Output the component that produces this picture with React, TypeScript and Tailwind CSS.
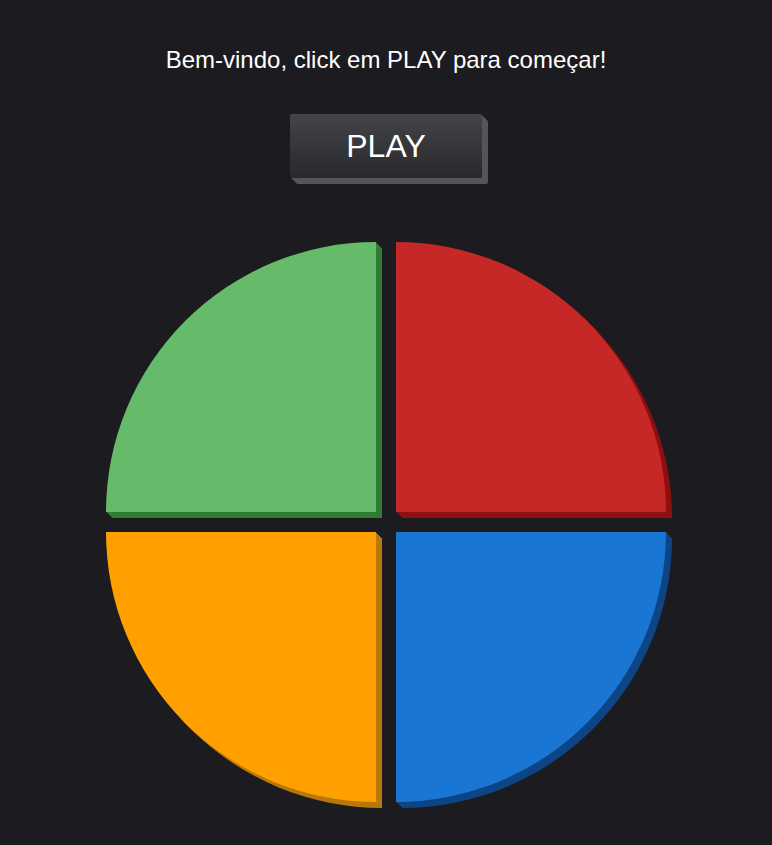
const Quadrant = ({ className }: { className: string }) => (
  <button className={`w-[270px] h-[270px] cursor-pointer ${className}`} />
);

export default function App() {
  return (
    <div className="min-h-[845px] w-full bg-[#1c1b1f] flex flex-col items-center font-['Liberation_Sans',Arial,sans-serif]">
      <h2 className="mt-[46px] text-white text-[24px] leading-[28px] font-normal">
        Bem-vindo, click em PLAY para começar!
      </h2>
      <button className="mt-[40px] w-[192px] h-[64px] rounded-[2px] bg-gradient-to-b from-[#444548] to-[#27292d] text-white text-[32px] shadow-[1px_1px_0_#555,2px_2px_0_#555,3px_3px_0_#555,4px_4px_0_#555,5px_5px_0_#555,6px_6px_0_#555]">
        PLAY
      </button>
      <div className="mt-[64px] grid grid-cols-[270px_270px] gap-[20px]">
        <Quadrant className="bg-[#66bb6a] rounded-tl-full shadow-[1px_1px_0_#2e7d32,2px_2px_0_#2e7d32,3px_3px_0_#2e7d32,4px_4px_0_#2e7d32,5px_5px_0_#2e7d32,6px_6px_0_#2e7d32]" />
        <Quadrant className="bg-[#c62828] rounded-tr-full shadow-[1px_1px_0_#8e1010,2px_2px_0_#8e1010,3px_3px_0_#8e1010,4px_4px_0_#8e1010,5px_5px_0_#8e1010,6px_6px_0_#8e1010]" />
        <Quadrant className="bg-[#ffa000] rounded-bl-full shadow-[1px_1px_0_#b8780a,2px_2px_0_#b8780a,3px_3px_0_#b8780a,4px_4px_0_#b8780a,5px_5px_0_#b8780a,6px_6px_0_#b8780a]" />
        <Quadrant className="bg-[#1976d2] rounded-br-full shadow-[1px_1px_0_#0d4585,2px_2px_0_#0d4585,3px_3px_0_#0d4585,4px_4px_0_#0d4585,5px_5px_0_#0d4585,6px_6px_0_#0d4585]" />
      </div>
    </div>
  );
}
